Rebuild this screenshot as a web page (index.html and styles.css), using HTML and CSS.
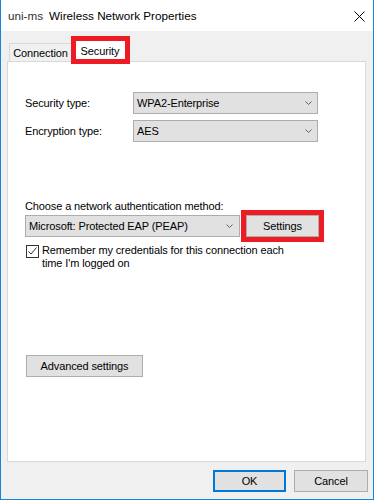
FILE: index.html
```html
<!DOCTYPE html>
<html lang="en">
<head>
  <meta charset="UTF-8" />
  <title>Wireless Network Properties</title>
  <link rel="stylesheet" href="styles.css">
</head>
<body>
<div class="window">
  <div class="titlebar">
    <span class="title-pre">uni-ms</span>
    <span class="title">Wireless Network Properties</span>
    <svg class="close" width="11" height="11" viewBox="0 0 11 11">
      <path d="M0.5 0.5 L10.5 10.5 M10.5 0.5 L0.5 10.5" stroke="#000" stroke-width="1" fill="none" />
    </svg>
  </div>

  <div class="tabs">
    <div class="tab">Connection</div>
    <div class="tab tab-active marked">Security</div>
  </div>

  <!-- Security tab -->
  <div class="panel">
    <div class="fields">
      <label>Security type:</label>
      <div class="select">
        <span>WPA2-Enterprise</span>
        <svg class="chevron" width="7" height="4" viewBox="0 0 7 4"><path d="M0.5 0.5 L3.5 3.5 L6.5 0.5" stroke="#606060" fill="none" /></svg>
      </div>
      <label>Encryption type:</label>
      <div class="select">
        <span>AES</span>
        <svg class="chevron" width="7" height="4" viewBox="0 0 7 4"><path d="M0.5 0.5 L3.5 3.5 L6.5 0.5" stroke="#606060" fill="none" /></svg>
      </div>
    </div>

    <div class="auth-label">Choose a network authentication method:</div>
    <div class="auth-row">
      <div class="select select-auth">
        <span>Microsoft: Protected EAP (PEAP)</span>
        <svg class="chevron" width="7" height="4" viewBox="0 0 7 4"><path d="M0.5 0.5 L3.5 3.5 L6.5 0.5" stroke="#606060" fill="none" /></svg>
      </div>
      <button class="btn btn-settings marked">Settings</button>
    </div>

    <div class="check-row">
      <span class="checkbox">
        <svg width="11" height="11" viewBox="0 0 11 11"><path d="M1.5 5.5 L4 8 L9.5 1.5" stroke="#333" stroke-width="1" fill="none" /></svg>
      </span>
      <span class="check-text">Remember my credentials for this connection each<br>time I'm logged on</span>
    </div>

    <button class="btn btn-adv">Advanced settings</button>
  </div>

  <div class="footer">
    <button class="btn btn-default">OK</button>
    <button class="btn btn-cancel">Cancel</button>
  </div>
</div>
</body>
</html>
```

FILE: styles.css
```css
* {
  box-sizing: border-box;
}

body {
  margin: 0;
  background: #fff;
  color: #000;
  font-family: 'Liberation Sans', Arial, sans-serif;
  font-size: 11px;
  letter-spacing: -0.12px;
}

.window {
  width: 374px;
  height: 500px;
  border: 1px solid #1883d7;
  border-top: none;
  background: #f0f0f0;
  display: flex;
  flex-direction: column;
}

.titlebar {
  height: 31px;
  flex: none;
  background: #fff;
  display: flex;
  align-items: center;
  padding: 0 8px 0 7px;
  font-size: 11.7px;
  letter-spacing: 0;
}

.title-pre {
  color: #333;
  margin-right: 6px;
}

.close {
  margin-left: auto;
  margin-top: 1px;
}

.tabs {
  display: flex;
  align-items: flex-end;
  height: 23px;
  margin: 7px 0 0 8px;
  flex: none;
}

.tab {
  width: 63px;
  height: 18px;
  display: flex;
  align-items: center;
  justify-content: center;
  border: 1px solid #d9d9d9;
  border-bottom: none;
  background: #f0f0f0;
}

.tab-active {
  width: 57px;
  height: 24px;
  margin-bottom: -1px;
  border-left: none;
  background: #fff;
  z-index: 1;
}

.marked {
  position: relative;
}

.marked::after {
  content: "";
  position: absolute;
  border: 5px solid #ed1c24;
  pointer-events: none;
}

.tab-active::after {
  top: -3px;
  left: -1px;
  right: -2px;
  bottom: -2px;
}

.panel {
  width: 359px;
  height: 401px;
  margin-left: 6px;
  flex: none;
  border: 1px solid #d9d9d9;
  background: #fff;
  padding: 30px 0 0 17px;
}

.fields {
  display: grid;
  grid-template-columns: 108px 185px;
  row-gap: 6px;
  align-items: center;
}

.select {
  height: 22px;
  display: flex;
  align-items: center;
  justify-content: space-between;
  padding: 0 5px 0 3px;
  border: 1px solid #adadad;
  background: #e1e1e1;
}

.auth-label {
  margin-top: 57px;
  line-height: 15px;
  margin-bottom: 1px;
}

.auth-row {
  display: flex;
  gap: 6px;
}

.select-auth {
  width: 215px;
  padding-right: 6px;
}

.btn {
  height: 22px;
  padding: 0;
  border: 1px solid #adadad;
  background: #e1e1e1;
  color: #000;
  font-family: inherit;
  font-size: 11px;
  letter-spacing: inherit;
}

.btn-settings {
  width: 73px;
}

.btn-settings::after {
  top: -6px;
  left: -6px;
  right: -6px;
  bottom: -6px;
}

.check-row {
  display: flex;
  align-items: flex-start;
  margin-top: 7px;
}

.checkbox {
  width: 13px;
  height: 13px;
  margin: 1px 3px 0 1px;
  border: 1px solid #333;
  background: #fff;
  display: flex;
}

.check-text {
  line-height: 13px;
}

.btn-adv {
  display: block;
  width: 117px;
  margin: 85px 0 0 1px;
}

.footer {
  display: flex;
  justify-content: flex-end;
  gap: 8px;
  padding: 8px 5px 0 0;
}

.btn-default {
  width: 73px;
  border: 2px solid #0078d7;
}

.btn-cancel {
  width: 74px;
}
```
